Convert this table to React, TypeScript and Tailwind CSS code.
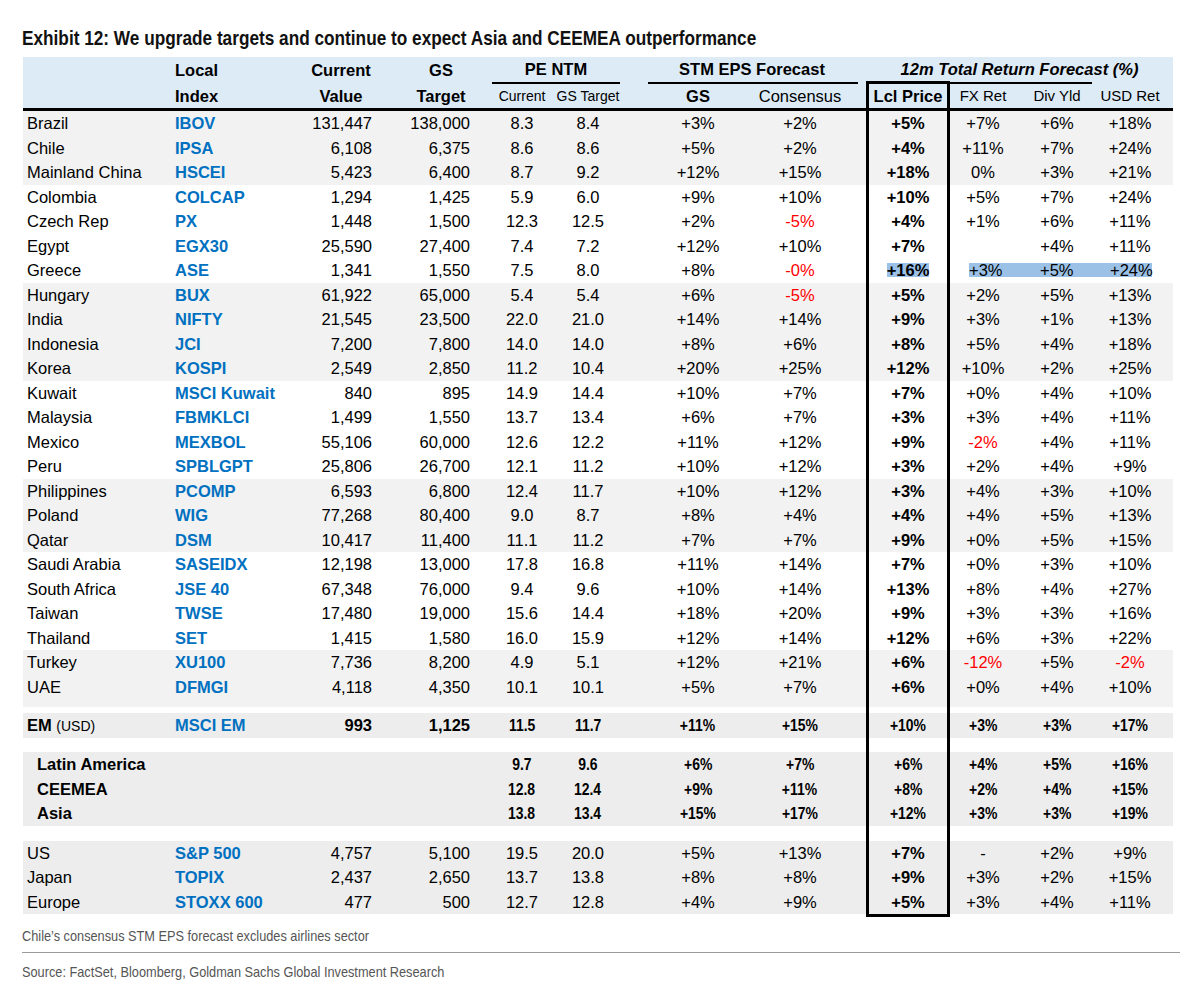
import React from "react";

type R = [string, string, string, string, string, string, string, string, string, string, string, string];

const rows: R[] = [
  ["Brazil", "IBOV", "131,447", "138,000", "8.3", "8.4", "+3%", "+2%", "+5%", "+7%", "+6%", "+18%"],
  ["Chile", "IPSA", "6,108", "6,375", "8.6", "8.6", "+5%", "+2%", "+4%", "+11%", "+7%", "+24%"],
  ["Mainland China", "HSCEI", "5,423", "6,400", "8.7", "9.2", "+12%", "+15%", "+18%", "0%", "+3%", "+21%"],
  ["Colombia", "COLCAP", "1,294", "1,425", "5.9", "6.0", "+9%", "+10%", "+10%", "+5%", "+7%", "+24%"],
  ["Czech Rep", "PX", "1,448", "1,500", "12.3", "12.5", "+2%", "-5%", "+4%", "+1%", "+6%", "+11%"],
  ["Egypt", "EGX30", "25,590", "27,400", "7.4", "7.2", "+12%", "+10%", "+7%", "", "+4%", "+11%"],
  ["Greece", "ASE", "1,341", "1,550", "7.5", "8.0", "+8%", "-0%", "+16%", "+3%", "+5%", "+24%"],
  ["Hungary", "BUX", "61,922", "65,000", "5.4", "5.4", "+6%", "-5%", "+5%", "+2%", "+5%", "+13%"],
  ["India", "NIFTY", "21,545", "23,500", "22.0", "21.0", "+14%", "+14%", "+9%", "+3%", "+1%", "+13%"],
  ["Indonesia", "JCI", "7,200", "7,800", "14.0", "14.0", "+8%", "+6%", "+8%", "+5%", "+4%", "+18%"],
  ["Korea", "KOSPI", "2,549", "2,850", "11.2", "10.4", "+20%", "+25%", "+12%", "+10%", "+2%", "+25%"],
  ["Kuwait", "MSCI Kuwait", "840", "895", "14.9", "14.4", "+10%", "+7%", "+7%", "+0%", "+4%", "+10%"],
  ["Malaysia", "FBMKLCI", "1,499", "1,550", "13.7", "13.4", "+6%", "+7%", "+3%", "+3%", "+4%", "+11%"],
  ["Mexico", "MEXBOL", "55,106", "60,000", "12.6", "12.2", "+11%", "+12%", "+9%", "-2%", "+4%", "+11%"],
  ["Peru", "SPBLGPT", "25,806", "26,700", "12.1", "11.2", "+10%", "+12%", "+3%", "+2%", "+4%", "+9%"],
  ["Philippines", "PCOMP", "6,593", "6,800", "12.4", "11.7", "+10%", "+12%", "+3%", "+4%", "+3%", "+10%"],
  ["Poland", "WIG", "77,268", "80,400", "9.0", "8.7", "+8%", "+4%", "+4%", "+4%", "+5%", "+13%"],
  ["Qatar", "DSM", "10,417", "11,400", "11.1", "11.2", "+7%", "+7%", "+9%", "+0%", "+5%", "+15%"],
  ["Saudi Arabia", "SASEIDX", "12,198", "13,000", "17.8", "16.8", "+11%", "+14%", "+7%", "+0%", "+3%", "+10%"],
  ["South Africa", "JSE 40", "67,348", "76,000", "9.4", "9.6", "+10%", "+14%", "+13%", "+8%", "+4%", "+27%"],
  ["Taiwan", "TWSE", "17,480", "19,000", "15.6", "14.4", "+18%", "+20%", "+9%", "+3%", "+3%", "+16%"],
  ["Thailand", "SET", "1,415", "1,580", "16.0", "15.9", "+12%", "+14%", "+12%", "+6%", "+3%", "+22%"],
  ["Turkey", "XU100", "7,736", "8,200", "4.9", "5.1", "+12%", "+21%", "+6%", "-12%", "+5%", "-2%"],
  ["UAE", "DFMGI", "4,118", "4,350", "10.1", "10.1", "+5%", "+7%", "+6%", "+0%", "+4%", "+10%"],
];

const grayIdx = new Set([0, 1, 2, 7, 8, 9, 10, 15, 16, 17, 22, 23]);

const regions: R[] = [
  ["Latin America", "", "", "", "9.7", "9.6", "+6%", "+7%", "+6%", "+4%", "+5%", "+16%"],
  ["CEEMEA", "", "", "", "12.8", "12.4", "+9%", "+11%", "+8%", "+2%", "+4%", "+15%"],
  ["Asia", "", "", "", "13.8", "13.4", "+15%", "+17%", "+12%", "+3%", "+3%", "+19%"],
];

const dm: R[] = [
  ["US", "S&P 500", "4,757", "5,100", "19.5", "20.0", "+5%", "+13%", "+7%", "-", "+2%", "+9%"],
  ["Japan", "TOPIX", "2,437", "2,650", "13.7", "13.8", "+8%", "+8%", "+9%", "+3%", "+2%", "+15%"],
  ["Europe", "STOXX 600", "477", "500", "12.7", "12.8", "+4%", "+9%", "+5%", "+3%", "+4%", "+11%"],
];

const C1 = "w-[147px] shrink-0 pl-[4px] whitespace-nowrap";
const C2 = "w-[120px] shrink-0 pl-[5px] whitespace-nowrap";
const C3 = "w-[102px] shrink-0 text-right pr-[20px]";
const C4 = "w-[98px] shrink-0 text-right pr-[20px]";
const PE1 = "w-[64px] shrink-0 text-center";
const PE2 = "w-[68px] shrink-0 text-center";
const SP1 = "w-[28px] shrink-0";
const EPS = "w-[96px] shrink-0 text-center";
const CONS = "w-[108px] shrink-0 text-center";
const SP2 = "w-[12px] shrink-0";
const LCL = "w-[84px] shrink-0 text-center border-x-[3px] border-black";
const FX = "w-[66px] shrink-0 text-center";
const DIV = "w-[82px] shrink-0 text-center";
const USD = "w-[64px] shrink-0 text-center";
const SP3 = "w-[11px] shrink-0";

function V({ v }: { v: string }) {
  const red = v.startsWith("-") && v.length > 1;
  return <span className={red ? "text-[#ff0000]" : ""}>{v}</span>;
}

function N({ v }: { v: string }) {
  return <span className="inline-block scale-x-[0.82] origin-center text-[17px]">{v}</span>;
}

function Spacer({ h, bg }: { h: string; bg: string }) {
  return (
    <div className={`flex ${h} ${bg}`}>
      <div className="w-[843px] shrink-0" />
      <div className={LCL} />
      <div className="w-[223px] shrink-0" />
    </div>
  );
}

function DataRow({ r, bg, hl }: { r: R; bg: string; hl?: boolean }) {
  return (
    <div className={`flex h-[24.5px] leading-[24.5px] ${bg}`}>
      <div className={C1}>{r[0]}</div>
      <div className={`${C2} font-bold text-[#0070c0]`}>{r[1]}</div>
      <div className={C3}>{r[2]}</div>
      <div className={C4}>{r[3]}</div>
      <div className={PE1}>{r[4]}</div>
      <div className={PE2}>{r[5]}</div>
      <div className={SP1} />
      <div className={EPS}><V v={r[6]} /></div>
      <div className={CONS}><V v={r[7]} /></div>
      <div className={SP2} />
      {hl ? (
        <div className={`${LCL} flex items-center justify-center font-bold`}>
          <span className="inline-block h-[14px] leading-[14px] bg-[#9bc2e6]">{r[8]}</span>
        </div>
      ) : (
        <div className={`${LCL} font-bold`}><V v={r[8]} /></div>
      )}
      {hl ? (
        <div className="w-[212px] shrink-0 flex items-center">
          <div className="ml-[19px] w-[183px] h-[14px] leading-[14px] bg-[#9bc2e6] flex">
            <span className="w-[71px] shrink-0">{r[9]}</span>
            <span className="w-[70px] shrink-0">{r[10]}</span>
            <span>{r[11]}</span>
          </div>
        </div>
      ) : (
        <>
          <div className={FX}><V v={r[9]} /></div>
          <div className={DIV}><V v={r[10]} /></div>
          <div className={USD}><V v={r[11]} /></div>
        </>
      )}
      <div className={SP3} />
    </div>
  );
}

function BoldRow({ r, h, em }: { r: R; h: string; em?: boolean }) {
  return (
    <div className={`flex ${h} bg-[#ededed] font-bold`}>
      <div className={`${C1} ${em ? "" : "pl-[14px]"}`}>
        {em ? (
          <>
            EM <span className="font-normal text-[14px]">(USD)</span>
          </>
        ) : (
          r[0]
        )}
      </div>
      <div className={`${C2} text-[#0070c0]`}>{r[1]}</div>
      <div className={C3}>{r[2]}</div>
      <div className={C4}>{r[3]}</div>
      <div className={PE1}><N v={r[4]} /></div>
      <div className={PE2}><N v={r[5]} /></div>
      <div className={SP1} />
      <div className={EPS}><N v={r[6]} /></div>
      <div className={CONS}><N v={r[7]} /></div>
      <div className={SP2} />
      <div className={LCL}><N v={r[8]} /></div>
      <div className={FX}><N v={r[9]} /></div>
      <div className={DIV}><N v={r[10]} /></div>
      <div className={USD}><N v={r[11]} /></div>
      <div className={SP3} />
    </div>
  );
}

export default function App() {
  return (
    <div className="w-[1200px] h-[991px] bg-white text-black font-['Liberation_Sans',Arial,sans-serif] text-[16.5px] overflow-hidden">
      <div className="pl-[22px] pt-[27px] h-[57px] whitespace-nowrap">
        <span className="inline-block origin-left scale-x-[0.84] text-[20.5px] leading-[22px] font-bold text-[#111]">
          Exhibit 12: We upgrade targets and continue to expect Asia and CEEMEA outperformance
        </span>
      </div>

      <div className="ml-[23px] w-[1150px]">
        {/* header row 1 */}
        <div className="flex h-[27px] bg-[#ddebf7] font-bold">
          <div className={C1} />
          <div className={`${C2} leading-[27px]`}>Local</div>
          <div className="w-[102px] shrink-0 text-center leading-[27px]">Current</div>
          <div className="w-[98px] shrink-0 text-center leading-[27px]">GS</div>
          <div className="w-[132px] shrink-0 flex flex-col">
            <div className="flex-1 text-center leading-[25px]">PE NTM</div>
            <div className="mx-[2px] h-[2px] bg-black" />
          </div>
          <div className="w-[28px] shrink-0" />
          <div className="w-[204px] shrink-0 flex flex-col">
            <div className="flex-1 text-center leading-[25px]">STM EPS Forecast</div>
            <div className="-ml-[2px] w-[210px] h-[2px] bg-black" />
          </div>
          <div className={SP2} />
          <div className="w-[307px] shrink-0 flex flex-col">
            <div className="flex-1 text-center leading-[24px] italic">12m Total Return Forecast (%)</div>
            <div className="flex items-end">
              <div className="w-[84px] h-[3px] bg-black" />
              <div className="w-[142px] h-[2px] bg-black" />
            </div>
          </div>
        </div>
        {/* header row 2 */}
        <div className="flex h-[24px] leading-[24px] bg-[#ddebf7]">
          <div className={C1} />
          <div className={`${C2} font-bold`}>Index</div>
          <div className="w-[102px] shrink-0 text-center font-bold">Value</div>
          <div className="w-[98px] shrink-0 text-center font-bold">Target</div>
          <div className={`${PE1} text-[14px]`}>Current</div>
          <div className={`${PE2} text-[14px] whitespace-nowrap`}>GS Target</div>
          <div className={SP1} />
          <div className={`${EPS} font-bold`}>GS</div>
          <div className={CONS}>Consensus</div>
          <div className={SP2} />
          <div className={`${LCL} font-bold`}>Lcl Price</div>
          <div className={`${FX} text-[15px]`}>FX Ret</div>
          <div className={`${DIV} text-[15px]`}>Div Yld</div>
          <div className={`${USD} text-[15px]`}>USD Ret</div>
          <div className={SP3} />
        </div>
        <div className="h-[3px] bg-black" />

        {rows.map((r, i) => (
          <DataRow key={r[0]} r={r} bg={grayIdx.has(i) ? "bg-[#f2f2f2]" : "bg-white"} hl={r[0] === "Greece"} />
        ))}
        <Spacer h="h-[8px]" bg="bg-[#f2f2f2]" />
        <Spacer h="h-[6px]" bg="bg-white" />
        <div className="leading-[25px]">
          <BoldRow r={["EM", "MSCI EM", "993", "1,125", "11.5", "11.7", "+11%", "+15%", "+10%", "+3%", "+3%", "+17%"]} h="h-[25px]" em />
        </div>
        <Spacer h="h-[14px]" bg="bg-white" />
        <div className="leading-[24.5px]">
          {regions.map((r) => (
            <BoldRow key={r[0]} r={r} h="h-[24.5px]" />
          ))}
        </div>
        <Spacer h="h-[15px]" bg="bg-white" />
        {dm.map((r) => (
          <DataRow key={r[0]} r={r} bg="bg-[#ededed]" />
        ))}
        <div className="flex h-[3px]">
          <div className="w-[843px] shrink-0" />
          <div className="w-[84px] shrink-0 bg-black" />
        </div>
      </div>

      <div className="pl-[22px] mt-[6px] h-[20px] whitespace-nowrap">
        <span className="inline-block origin-left scale-x-[0.85] text-[15px] leading-[20px] text-[#555]">
          Chile’s consensus STM EPS forecast excludes airlines sector
        </span>
      </div>
      <div className="ml-[22px] mt-[9px] w-[1158px] h-[1px] bg-[#9a9a9a]" />
      <div className="pl-[22px] mt-[6px] h-[20px] whitespace-nowrap">
        <span className="inline-block origin-left scale-x-[0.85] text-[15px] leading-[20px] text-[#555]">
          Source: FactSet, Bloomberg, Goldman Sachs Global Investment Research
        </span>
      </div>
    </div>
  );
}
